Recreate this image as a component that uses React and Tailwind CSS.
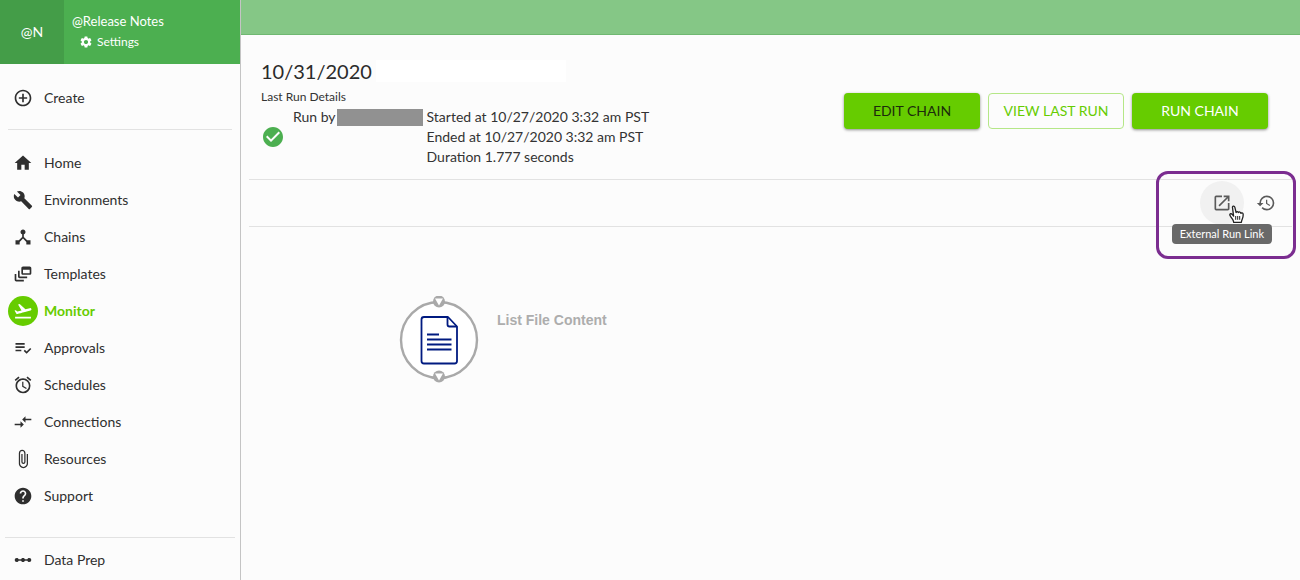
import clsx from 'clsx'
import {
  MdAccessAlarm,
  MdAddCircleOutline,
  MdAttachFile,
  MdBuild,
  MdCheckCircle,
  MdCompareArrows,
  MdDeviceHub,
  MdFlightTakeoff,
  MdHelp,
  MdHistory,
  MdHome,
  MdLinearScale,
  MdOpenInNew,
  MdOutlineDynamicFeed,
  MdPlaylistAddCheck,
  MdSettings,
} from 'react-icons/md'

const navItems = [
  { label: 'Home', icon: MdHome },
  { label: 'Environments', icon: MdBuild },
  { label: 'Chains', icon: MdDeviceHub },
  { label: 'Templates', icon: MdOutlineDynamicFeed },
  { label: 'Monitor', icon: MdFlightTakeoff, active: true },
  { label: 'Approvals', icon: MdPlaylistAddCheck },
  { label: 'Schedules', icon: MdAccessAlarm },
  { label: 'Connections', icon: MdCompareArrows },
  { label: 'Resources', icon: MdAttachFile },
  { label: 'Support', icon: MdHelp },
]

const NavItem = ({ label, icon: Icon, active }) => (
  <a
    href="#"
    aria-current={active ? 'page' : undefined}
    className={clsx(
      'flex items-center gap-1.5 h-[37px] pl-2 text-sm',
      active ? 'font-bold text-[#66cc00]' : 'text-[#2f2f2f]'
    )}
  >
    <span
      className={clsx(
        'flex items-center justify-center size-[30px] rounded-full',
        active && 'bg-[#66cc00] text-white'
      )}
    >
      <Icon className="size-5" />
    </span>
    {label}
  </a>
)

const Sidebar = () => (
  <aside className="w-[241px] shrink-0 border-r border-[#c4c4c4]">
    <div className="flex h-16 bg-[#4caf50] text-white">
      <div className="flex items-center justify-center w-16 bg-[#449d48] text-sm">@N</div>
      <div className="pl-2 pt-[11px]">
        <div className="text-[13px] leading-5">@Release Notes</div>
        <a href="#" className="flex items-center gap-1 pl-[7px] text-xs leading-[22px]">
          <MdSettings className="size-3.5" />
          Settings
        </a>
      </div>
    </div>

    <nav className="pt-[15px]">
      <NavItem label="Create" icon={MdAddCircleOutline} />
      <hr className="mx-2 mt-[13px] mb-3.5 border-[#e2e2e2]" />
      {navItems.map((item) => (
        <NavItem key={item.label} {...item} />
      ))}
      <hr className="mx-[5px] mt-[23px] mb-[3px] border-[#e2e2e2]" />
      <NavItem label="Data Prep" icon={MdLinearScale} />
    </nav>
  </aside>
)

const ChainButton = ({ className, children }) => (
  <button
    type="button"
    className={clsx('w-[136px] h-9 rounded text-sm cursor-pointer', className)}
  >
    {children}
  </button>
)

const RunHeader = () => (
  <section className="flex items-start justify-between pl-3 pr-6 pt-6 pb-3">
    <div>
      <div className="flex items-center gap-1">
        <h1 className="text-xl leading-6 text-[#2b2b2b]">10/31/2020</h1>
        <span className="w-[190px] h-[22px] bg-white" />
      </div>
      <h2 className="mt-1 text-xs leading-5 text-[#333]">Last Run Details</h2>
      <div className="flex text-sm leading-5 text-[#333]">
        <MdCheckCircle className="self-center size-6 text-[#4caf50]" />
        <div className="flex items-center self-start ml-2">
          Run by
          <span className="w-[86px] h-[17px] ml-px bg-[#919191]" />
        </div>
        <div className="ml-1">
          <p>Started at 10/27/2020 3:32 am PST</p>
          <p>Ended at 10/27/2020 3:32 am PST</p>
          <p>Duration 1.777 seconds</p>
        </div>
      </div>
    </div>

    <div className="flex gap-2 mt-[34px]">
      <ChainButton className="bg-[#66cc00] text-[#1c2b0c] shadow-[0_1px_3px_rgba(0,0,0,0.45)]">
        EDIT CHAIN
      </ChainButton>
      <ChainButton className="border border-[#b5e787] text-[#66cc00]">VIEW LAST RUN</ChainButton>
      <ChainButton className="bg-[#66cc00] text-white shadow-[0_1px_3px_rgba(0,0,0,0.45)]">
        RUN CHAIN
      </ChainButton>
    </div>
  </section>
)

const PointerCursor = () => (
  <svg viewBox="0 0 16 18" className="absolute left-[29px] top-6 w-4 h-[18px]">
    <path
      d="M4.6 11.2 3.2 9.4C2.5 8.6 1.3 8.5.9 9.3c-.3.6.1 1.2.6 2l2.3 3.4c.4.7.8 1.3.8 2.6h7.8c0-1.4.5-2.3.9-3.3.5-1.2.9-2.4.9-4.6 0-1.7-1.9-2-2.300-1 .1-1.500-2-1.900-2.500-.8-.2-1.100-1.900-1.200-2.300-.1L5.800 2.100C5.400.5 3.100.9 3.500 2.600z"
      fill="#fff"
      stroke="#222"
      strokeWidth="1.3"
      strokeLinejoin="round"
    />
    <path d="M6.700 11v3.800M8.700 11v3.800M10.700 11v3.800" stroke="#222" strokeWidth="1" />
  </svg>
)

const RunToolbar = () => (
  <div className="relative flex items-center justify-end h-12 border-y border-[#e2e2e2]">
    <button
      type="button"
      aria-label="External Run Link"
      className="relative flex items-center justify-center size-11 rounded-full bg-[#f1f1f1] text-[#5a5a5a]"
    >
      <MdOpenInNew className="size-5" />
      <PointerCursor />
    </button>
    <button
      type="button"
      aria-label="History"
      className="flex items-center justify-center size-11 mr-1 text-[#5a5a5a]"
    >
      <MdHistory className="size-5" />
    </button>
    <div
      role="tooltip"
      className="absolute right-5 top-11 z-10 px-2 rounded bg-[#696969] text-[11px] leading-5 text-white"
    >
      External Run Link
    </div>
    <div className="absolute -right-1 -top-[9px] w-[140px] h-[88px] rounded-xl border-3 border-[#7b2d90] pointer-events-none" />
  </div>
)

const ListFileNode = () => (
  <svg viewBox="0 0 80 88" className="w-20 h-22 shrink-0">
    <circle cx="40" cy="44" r="38" fill="#fff" stroke="#a9a9a9" strokeWidth="2.4" />
    <circle cx="40" cy="5.5" r="6" fill="#a9a9a9" />
    <path d="M36 2.500h8L40 9.500z" fill="#fff" />
    <circle cx="40" cy="80.5" r="6" fill="#a9a9a9" />
    <path d="M36 77.500h8L40 84.500z" fill="#fff" />
    <g fill="none" stroke="#001a80" strokeWidth="1.8" strokeLinejoin="round">
      <path d="M49 21H25a2.5 2.5 0 0 0-2.5 2.5v41.500a2.500 2.500 0 0 0 2.500 2.500h30.500a2.500 2.500 0 0 0 2.500-2.500V30.500z" />
      <path d="M48.500 21v7.500a2 2 0 0 0 2 2H58" />
      <path d="M28 38.500h12M28 43.500h24.500M28 48.500h24.500M28 53.500h24.500" />
    </g>
  </svg>
)

const App = () => (
  <div className="flex min-h-screen bg-[#fcfcfc] font-['Lato',sans-serif]">
    <Sidebar />
    <div className="flex flex-col flex-1 min-w-0">
      <header className="h-[35px] bg-[#85c786] border-b border-[#6fb871]" />
      <main className="px-2">
        <RunHeader />
        <RunToolbar />
        <div className="flex gap-[18px] pl-[150px] pt-[69px]">
          <ListFileNode />
          <h3 className="mt-3.5 font-['Liberation_Sans',Arial,sans-serif] font-bold text-sm leading-5 text-[#adadad]">
            List File Content
          </h3>
        </div>
      </main>
    </div>
  </div>
)

export default App
